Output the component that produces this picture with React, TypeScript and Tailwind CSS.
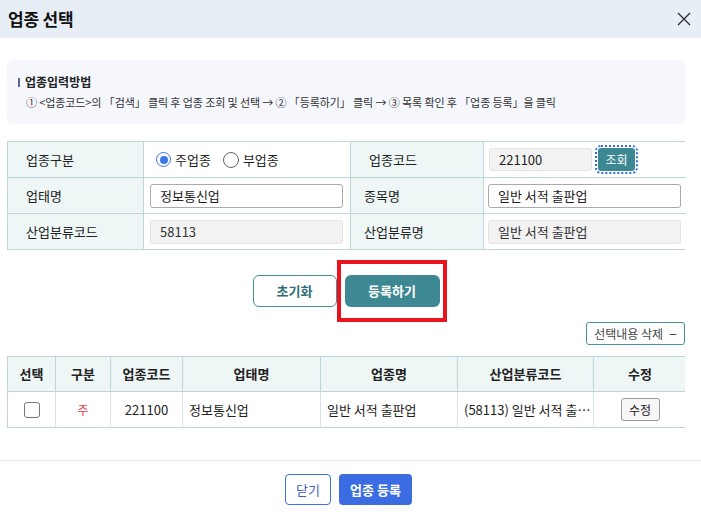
import React from "react";

const font = { fontFamily: "'Noto Sans CJK KR', 'Noto Sans', sans-serif" };

function Label({ children }: { children: React.ReactNode }) {
  return (
    <div className="flex items-center bg-[#eef6f6] pl-[18px] text-[13px] text-[#222]">{children}</div>
  );
}

export default function App() {
  return (
    <div style={font} className="w-[701px] h-[514px] bg-white overflow-hidden text-[#222]">
      {/* header */}
      <div className="h-[38px] bg-[#e7eef6] flex items-center justify-between pl-[8px] pr-[9px]">
        <div className="text-[17px] font-bold text-[#111] tracking-[-0.2px]">업종 선택</div>
        <svg width="16" height="16" viewBox="0 0 16 16" className="text-[#333]">
          <path d="M2 2 L14 14 M14 2 L2 14" stroke="currentColor" strokeWidth="1.4" fill="none" />
        </svg>
      </div>

      <div className="px-[7px] pr-[16px] pt-[22px]">
        {/* info box */}
        <div className="h-[64px] rounded-[6px] bg-[#f5f7fc] pl-[10px] pt-[13px]">
          <div className="flex items-center text-[12px] font-semibold text-[#222] leading-[18px]">
            <span className="inline-block w-[2px] h-[9px] bg-[#5a6b9a] mr-[5px] ml-[1px]" />
            업종입력방법
          </div>
          <div className="text-[11px] text-[#333] leading-[18px] mt-[2px] pl-[9px] tracking-[-0.1px]">
            ①&nbsp;&lt;업종코드&gt;의 「검색」 클릭 후 업종 조회 및 선택 → ② 「등록하기」 클릭 → ③ 목록 확인 후 「업종 등록」을 클릭
          </div>
        </div>

        {/* form table */}
        <div className="mt-[17px] grid grid-cols-[135px_208px_132px_203px] grid-rows-[35px_36px_36px] border border-[#bcd6d9] [&>*]:border-[#bcd6d9] w-[678px]">
          <Label>업종구분</Label>
          <div className="flex items-center pl-[12px] border-l border-r text-[13px] bg-white">
            <span className="w-[15px] h-[15px] rounded-full border-[1.5px] border-[#3b76e6] flex items-center justify-center">
              <span className="w-[8px] h-[8px] rounded-full bg-[#3b76e6]" />
            </span>
            <span className="ml-[4px]">주업종</span>
            <span className="ml-[12px] w-[16px] h-[16px] rounded-full border border-[#666]" />
            <span className="ml-[4px]">부업종</span>
          </div>
          <Label>업종코드</Label>
          <div className="flex items-center pl-[5px] border-l bg-white">
            <div className="w-[103px] h-[23px] rounded-[3px] bg-[#f2f2f2] border border-[#e4e4e4] flex items-center pl-[9px] text-[13px]">221100</div>
            <div className="ml-[6px] outline-dotted outline-2 outline-[#2f6fe3] outline-offset-[1px] rounded-[3px] bg-[#3d8893] text-white text-[12px] w-[37px] h-[23px] flex items-center justify-center">조회</div>
          </div>

          <div className="flex items-center bg-[#eef6f6] pl-[18px] text-[13px] border-t">업태명</div>
          <div className="flex items-center pl-[6px] border-l border-r border-t bg-white">
            <div className="w-[193px] h-[24px] rounded-[3px] border border-[#aaa] flex items-center pl-[9px] text-[13px]">정보통신업</div>
          </div>
          <div className="flex items-center bg-[#eef6f6] pl-[13px] text-[13px] border-t">종목명</div>
          <div className="flex items-center pl-[4px] border-l border-t bg-white">
            <div className="w-[193px] h-[24px] rounded-[3px] border border-[#aaa] flex items-center pl-[9px] text-[13px]">일반 서적 출판업</div>
          </div>

          <div className="flex items-center bg-[#eef6f6] pl-[18px] text-[13px] border-t">산업분류코드</div>
          <div className="flex items-center pl-[6px] border-l border-r border-t bg-white">
            <div className="w-[193px] h-[24px] rounded-[3px] bg-[#f2f2f2] border border-[#e4e4e4] flex items-center pl-[9px] text-[13px] text-[#333]">58113</div>
          </div>
          <div className="flex items-center bg-[#eef6f6] pl-[13px] text-[13px] border-t">산업분류명</div>
          <div className="flex items-center pl-[4px] border-l border-t bg-white">
            <div className="w-[193px] h-[24px] rounded-[3px] bg-[#f2f2f2] border border-[#e4e4e4] flex items-center pl-[9px] text-[13px] text-[#333]">일반 서적 출판업</div>
          </div>
        </div>

        {/* action buttons */}
        <div className="mt-[25px] flex justify-center gap-[8px] w-[678px]">
          <div className="w-[84px] h-[32px] rounded-[6px] border border-[#4a8f99] bg-white text-[#2e6f78] text-[13px] font-semibold flex items-center justify-center">초기화</div>
          <div className="relative">
            <div className="w-[95px] h-[32px] rounded-[6px] bg-[#3d8893] text-white text-[13px] font-semibold flex items-center justify-center">등록하기</div>
            <div className="absolute left-[-8px] top-[-15px] w-[110px] h-[62px] border-[4px] border-[#e8131d] pointer-events-none" />
          </div>
        </div>

        {/* delete button */}
        <div className="mt-[15px] flex justify-end w-[678px]">
          <div className="h-[23px] w-[99px] rounded-[3px] border border-[#4a8f99] text-[12px] text-[#444] flex items-center justify-center gap-[6px]">
            선택내용 삭제 <span className="text-[14px] leading-none">−</span>
          </div>
        </div>

        {/* list table */}
        <div className="mt-[11px] w-[678px] border-l border-t border-b border-[#bcd6d9]">
          <div className="grid grid-cols-[48px_55px_72px_138px_137px_136px_92px] h-[35px] bg-[#eef6f6] text-[13px] font-semibold border-b border-[#bcd6d9] [&>*]:border-[#bcd6d9]">
            <div className="flex items-center justify-center border-r">선택</div>
            <div className="flex items-center justify-center border-r">구분</div>
            <div className="flex items-center justify-center border-r">업종코드</div>
            <div className="flex items-center justify-center border-r">업태명</div>
            <div className="flex items-center justify-center border-r">업종명</div>
            <div className="flex items-center justify-center border-r">산업분류코드</div>
            <div className="flex items-center justify-center">수정</div>
          </div>
          <div className="grid grid-cols-[48px_55px_72px_138px_137px_136px_92px] h-[35px] text-[13px] [&>*]:border-[#d2e4e6]">
            <div className="flex items-center justify-center border-r">
              <span className="w-[16px] h-[16px] rounded-[3px] border border-[#777]" />
            </div>
            <div className="flex items-center justify-center border-r text-[#e2404a] text-[12px]">주</div>
            <div className="flex items-center justify-center border-r">221100</div>
            <div className="flex items-center pl-[6px] border-r">정보통신업</div>
            <div className="flex items-center pl-[6px] border-r">일반 서적 출판업</div>
            <div className="flex items-center pl-[6px] border-r whitespace-nowrap">(58113) 일반 서적 출…</div>
            <div className="flex items-center justify-center">
              <div className="w-[39px] h-[23px] rounded-[3px] border border-[#999] bg-[#f7f7f7] text-[12px] flex items-center justify-center">수정</div>
            </div>
          </div>
        </div>
      </div>

      {/* footer */}
      <div className="mt-[32px] border-t border-[#e3e8ef] flex justify-center gap-[8px] pt-[13px] pr-[4px]">
        <div className="w-[46px] h-[31px] rounded-[4px] border border-[#3b6fe3] text-[#3b5fc0] text-[13px] flex items-center justify-center">닫기</div>
        <div className="w-[73px] h-[31px] rounded-[4px] bg-[#3b6ce2] text-white text-[13px] font-semibold flex items-center justify-center">업종 등록</div>
      </div>
    </div>
  );
}
